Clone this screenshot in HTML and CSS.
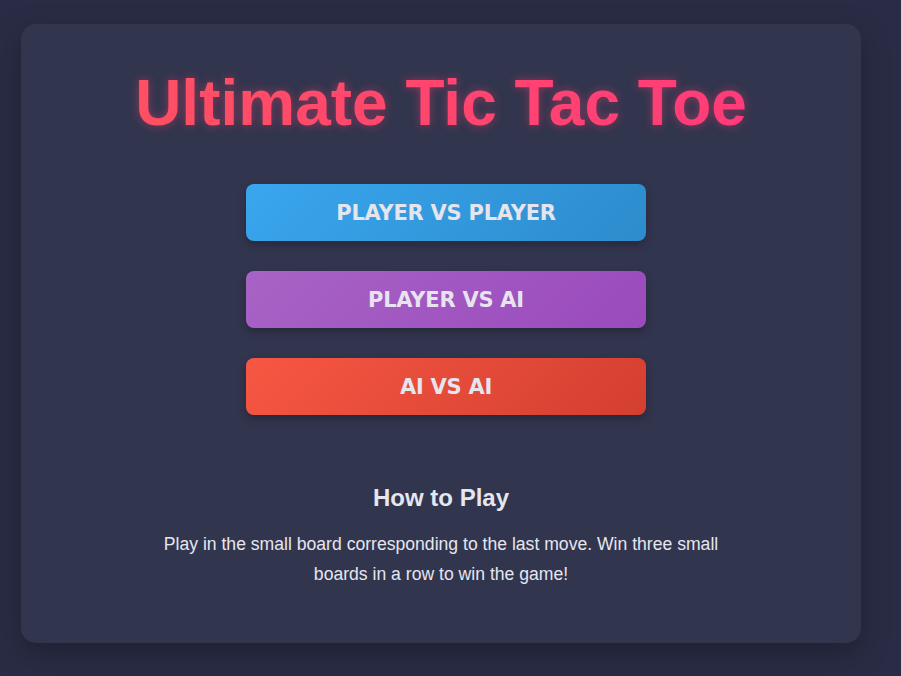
FILE: index.html
```html
<!DOCTYPE html>
<html lang="en">
<head>
<meta charset="utf-8">
<title>Ultimate Tic Tac Toe</title>
<link rel="stylesheet" href="styles.css">
</head>
<body>
<main class="card">
  <h1 class="title">Ultimate Tic Tac Toe</h1>
  <div class="modes">
    <button class="mode mode-pvp">Player vs Player</button>
    <button class="mode mode-pva">Player vs AI</button>
    <button class="mode mode-ava">AI vs AI</button>
  </div>
  <section class="rules">
    <h3 class="rules-title">How to Play</h3>
    <p class="rules-text">Play in the small board corresponding to the last move. Win three small boards in a row to win the game!</p>
  </section>
</main>
</body>
</html>
```

FILE: styles.css
```css
html, body {
  margin: 0;
  padding: 0;
}
body {
  background: #292c44;
  min-height: 676px;
  padding: 24px 0 0 21px;
  box-sizing: border-box;
  font-family: "Liberation Sans", Arial, sans-serif;
  color: #e6e6ee;
}
.card {
  width: 840px;
  height: 619px;
  box-sizing: border-box;
  background: #32354e;
  border-radius: 15px;
  box-shadow: 0 10px 30px rgba(0, 0, 0, 0.25);
  padding-top: 42px;
  display: flex;
  flex-direction: column;
  align-items: center;
}
.title {
  margin: 0;
  font-size: 64px;
  font-weight: 700;
  letter-spacing: 0;
  line-height: normal;
  background: linear-gradient(90deg, #ff5660, #ff3b7e);
  -webkit-background-clip: text;
  background-clip: text;
  -webkit-text-fill-color: transparent;
  text-shadow: 0 0 10px rgba(255, 64, 110, 0.45);
}
.modes {
  margin-top: 44px;
  margin-left: 10px;
  display: flex;
  flex-direction: column;
  gap: 30px;
}
.mode {
  width: 400px;
  height: 57px;
  border: none;
  border-radius: 8px;
  font-family: "DejaVu Sans", Verdana, sans-serif;
  font-weight: 700;
  font-size: 21px;
  letter-spacing: -0.25px;
  text-transform: uppercase;
  color: #e6e4ec;
  box-shadow: 0 4px 8px rgba(0, 0, 0, 0.25);
  padding: 0;
  cursor: pointer;
}
.mode-pvp {
  background: linear-gradient(135deg, #39a6ee, #2d8ccc);
}
.mode-pva {
  background: linear-gradient(135deg, #a863c6, #9a4abc);
}
.mode-ava {
  background: linear-gradient(135deg, #f75743, #d33f30);
}
.rules {
  margin-top: 69px;
  display: flex;
  flex-direction: column;
  align-items: center;
}
.rules-title {
  margin: 0;
  font-size: 24px;
  font-weight: 700;
  line-height: 27.6px;
  color: #e6e6ee;
}
.rules-text {
  margin: 18px 0 0;
  max-width: 600px;
  font-size: 17.6px;
  line-height: 29.9px;
  text-align: center;
  color: #e6e6ee;
}
```
